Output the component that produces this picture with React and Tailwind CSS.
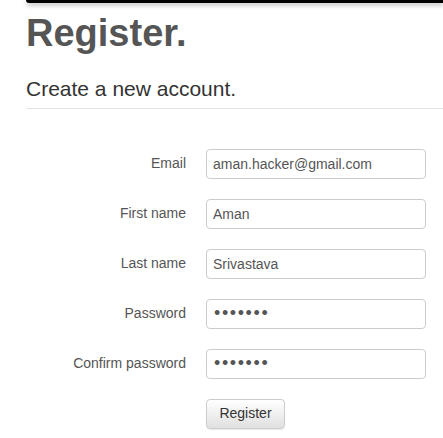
import React from "react";

const fields = [
  { label: "Email", type: "text", value: "aman.hacker@gmail.com" },
  { label: "First name", type: "text", value: "Aman" },
  { label: "Last name", type: "text", value: "Srivastava" },
  { label: "Password", type: "password", value: "1234567" },
  { label: "Confirm password", type: "password", value: "1234567" },
];

const App = () => {
  return (
    <div className="min-h-screen bg-white font-['Liberation_Sans',Arial,sans-serif]">
      {/* navbar edge */}
      <div className="ml-[26px] h-[3px] rounded-bl-[4px] bg-black shadow-[0_2px_5px_rgba(0,0,0,0.35)]" />

      <div className="pl-[26px]">
        <h2 className="mt-[10px] text-[38px] font-bold leading-[1.1] text-[#555]">
          Register.
        </h2>
        <h4 className="mt-[22px] text-[21px] leading-[1.1] text-[#333]">
          Create a new account.
        </h4>
        <hr className="mt-[8px] border-t border-[#e3e3e3]" />

        <form className="mt-[40px] flex flex-col gap-[20px]">
          {fields.map((f) => (
            <div key={f.label} className="flex items-center">
              <label className="w-[160px] text-right text-[14px] text-[#555]">
                {f.label}
              </label>
              <input
                readOnly
                type={f.type}
                defaultValue={f.value}
                className={
                  f.type === "password"
                    ? "ml-[20px] h-[30px] w-[220px] rounded-[4px] border border-[#ccc] bg-white px-[7px] text-[18px] tracking-[1.6px] text-[#555] outline-none"
                    : "ml-[20px] h-[30px] w-[220px] rounded-[4px] border border-[#ccc] bg-white px-[6px] text-[14px] text-[#555] outline-none"
                }
              />
            </div>
          ))}
          <div className="flex">
            <div className="w-[160px]" />
            <button
              type="button"
              className="ml-[20px] h-[30px] w-[79px] rounded-[4px] border border-[#ccc] bg-gradient-to-b from-white to-[#e0e0e0] text-[14px] text-[#333] shadow-[0_1px_1px_rgba(0,0,0,0.08)]"
            >
              Register
            </button>
          </div>
        </form>
      </div>
    </div>
  );
};

export default App;
